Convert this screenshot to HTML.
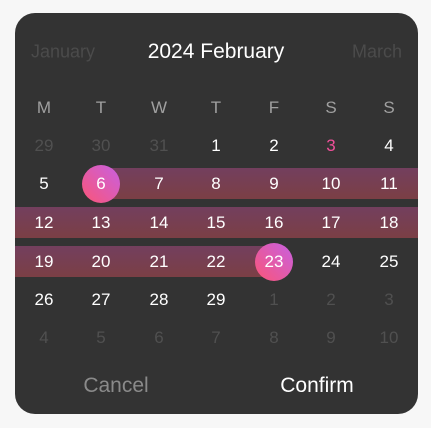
<!DOCTYPE html>
<html><head><style>
body{margin:0;width:431px;height:428px;background:#f7f7f7;font-family:"Liberation Sans",sans-serif;position:relative;overflow:hidden}
.card{position:absolute;left:15px;top:13px;width:403px;height:401px;background:#333;border-radius:20px;overflow:hidden}
.t{position:absolute;transform:translate(-50%,-50%);white-space:nowrap;color:#fff}
.band{position:absolute;height:31px;background:linear-gradient(#733f5e,#7b3f45)}
.c{position:absolute;width:38px;height:38px;border-radius:50%;background:linear-gradient(45deg,#fb5577,#c760e2);transform:translate(-50%,-50%)}
</style></head><body>
<div class="card"></div>
<div class="band" style="left:101px;width:317px;top:168px"></div>
<div class="band" style="left:15px;width:403px;top:207px"></div>
<div class="band" style="left:15px;width:259px;top:246px"></div>
<div class="c" style="left:101px;top:184px"></div>
<div class="c" style="left:274px;top:262px"></div>
<div class="t" style="left:63px;top:52px;font-size:18px;color:#4b4b4b">January</div>
<div class="t" style="left:216px;top:52px;font-size:21px">2024 February</div>
<div class="t" style="left:377px;top:52px;font-size:18px;color:#4b4b4b">March</div>
<div id="g"></div>
<div class="t" style="left:116px;top:386px;font-size:21px;color:#8a8a8a">Cancel</div>
<div class="t" style="left:317px;top:386px;font-size:21px">Confirm</div>
<script>
var xs=[44,101,159,216,274,331,389],g=document.getElementById('g'),h='';
function t(x,y,s,c){h+='<div class="t" style="left:'+x+'px;top:'+y+'px;font-size:17px;color:'+c+'">'+s+'</div>';}
'MTWTFSS'.split('').forEach(function(s,i){t(xs[i],108,s,'#a0a0a0')});
var rows=[[29,30,31,1,2,3,4],[5,6,7,8,9,10,11],[12,13,14,15,16,17,18],[19,20,21,22,23,24,25],[26,27,28,29,1,2,3],[4,5,6,7,8,9,10]];
var ys=[146,184,223,262,300,338];
rows.forEach(function(r,ri){r.forEach(function(d,i){var c='#fff';
if((ri==0&&i<3)||(ri==4&&i>3)||ri==5)c='#505050';
if(ri==0&&i==5)c='#f0509a';
t(xs[i],ys[ri],d,c);});});
g.innerHTML=h;
</script>
</body></html>
